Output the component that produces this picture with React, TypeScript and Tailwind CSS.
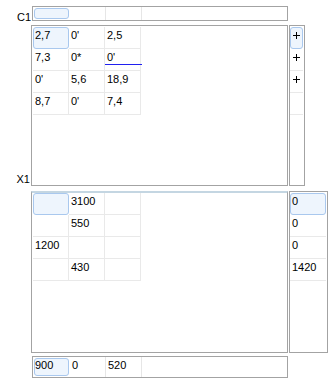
const grid1 = [
  ["2,7", "0'", "2,5"],
  ["7,3", "0*", "0'"],
  ["0'", "5,6", "18,9"],
  ["8,7", "0'", "7,4"],
];

const grid2 = [
  ["", "3100", ""],
  ["", "550", ""],
  ["1200", "", ""],
  ["", "430", ""],
];

const side2 = ["0", "0", "0", "1420"];

const Plus = () => (
  <svg width="7" height="7" viewBox="0 0 7 7" className="block">
    <path d="M0 3.5H7M3.5 0V7" stroke="#000" strokeWidth="1" />
  </svg>
);

const Cell = ({ text, active, editing }: { text: string; active?: boolean; editing?: boolean }) => {
  if (active) {
    return (
      <div className="w-[36px] h-[22px] rounded-[3px] border border-[#a9c8ee] bg-[#eef5fd] pl-[1px] pt-[1px] leading-[13px]">
        {text}
      </div>
    );
  }
  return (
    <div className="w-[36px] h-[22px] border-r border-b border-[#e9e9e9] pl-[2px] pt-[2px] leading-[13px]">
      {editing ? (
        <div className="-mt-[2px] -ml-[2px] w-[37px] h-[16px] pl-[2px] pt-[2px] border-b border-[#2020f0]">{text}</div>
      ) : (
        text
      )}
    </div>
  );
};

const Bar = ({ values, h }: { values: string[]; h: string }) => (
  <div className={`w-[256px] ${h} border border-[#a3a3a3] flex`}>
    <div className="w-[37px] h-full p-[1px]">
      <div className="w-full h-full rounded-[3px] border border-[#a9c8ee] bg-[#eef5fd] leading-[13px]">{values[0]}</div>
    </div>
    <div className="w-[36px] h-full border-r border-[#e6e6e6] pl-[2px] pt-[2px] leading-[13px]">{values[1]}</div>
    <div className="w-[36px] h-full border-r border-[#e6e6e6] pl-[2px] pt-[2px] leading-[13px]">{values[2]}</div>
  </div>
);

export default function App() {
  return (
    <div className="w-[335px] h-[382px] bg-white text-black text-[11px] font-['Liberation_Sans',Arial,sans-serif] pt-[6px]">
      {/* C1 row */}
      <div className="flex h-[15px]">
        <div className="w-[32px] text-right pt-[6px] leading-[11px] pr-[1px]">C1</div>
        <Bar values={["", "", ""]} h="h-[15px]" />
      </div>

      {/* first grid */}
      <div className="flex mt-[4px] h-[161px]">
        <div className="w-[31px] flex items-end justify-end pb-[1px] pr-[1px] leading-[11px]">X1</div>
        <div className="w-[257px] h-full border border-[#a3a3a3] pl-[1px] pt-[1px]">
          {grid1.map((row, r) => (
            <div key={r} className="flex">
              {row.map((v, c) => (
                <Cell key={c} text={v} active={r === 0 && c === 0} editing={r === 1 && c === 2} />
              ))}
            </div>
          ))}
        </div>
        <div className="ml-[1px] w-[16px] h-full border border-[#a3a3a3] pt-[1px]">
          {[0, 1, 2, 3].map((i) => (
            <div
              key={i}
              className={
                i === 0
                  ? "w-[13px] h-[22px] rounded-[3px] border border-[#a9c8ee] bg-[#eef5fd] flex justify-center pt-[4px]"
                  : "w-[13px] h-[22px] border-b border-[#e9e9e9] flex justify-center pt-[5px]"
              }
            >
              {i < 3 && <Plus />}
            </div>
          ))}
        </div>
      </div>

      {/* second grid */}
      <div className="flex mt-[5px] h-[162px]">
        <div className="w-[31px]" />
        <div className="w-[257px] h-full border border-[#a3a3a3] border-t-2 border-t-[#c4d6e2] pl-[1px]">
          {grid2.map((row, r) => (
            <div key={r} className="flex">
              {row.map((v, c) => (
                <Cell key={c} text={v} active={r === 0 && c === 0} />
              ))}
            </div>
          ))}
        </div>
        <div className="ml-[1px] w-[39px] h-full border border-[#a3a3a3] pt-[1px]">
          {side2.map((v, i) => (
            <div
              key={i}
              className={
                i === 0
                  ? "w-[36px] h-[22px] rounded-[3px] border border-[#a9c8ee] bg-[#eef5fd] pl-[1px] pt-[1px] leading-[13px]"
                  : "w-[36px] h-[22px] border-b border-[#e9e9e9] pl-[2px] pt-[2px] leading-[13px]"
              }
            >
              {v}
            </div>
          ))}
        </div>
      </div>

      {/* bottom bar */}
      <div className="flex mt-[3px]">
        <div className="w-[32px]" />
        <Bar values={["900", "0", "520"]} h="h-[22px]" />
      </div>
    </div>
  );
}
